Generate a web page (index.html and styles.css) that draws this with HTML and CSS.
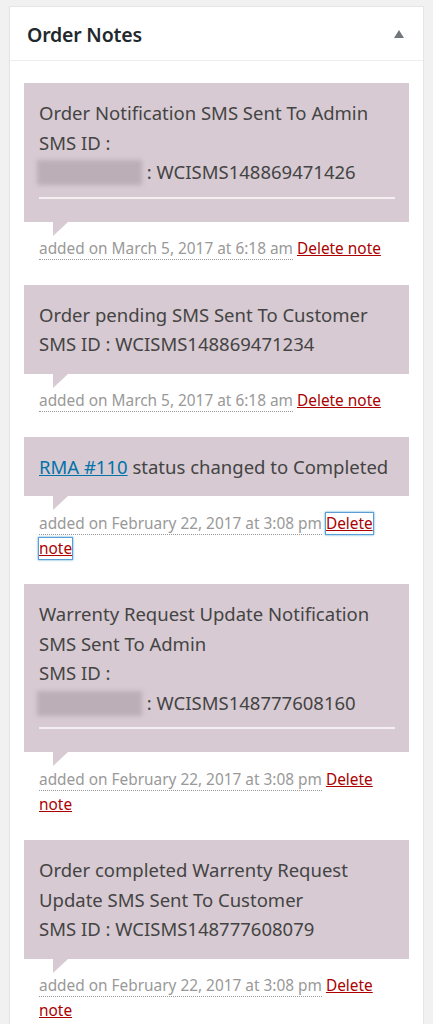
FILE: index.html
```html
<!DOCTYPE html>
<html>
<head>
<meta charset="utf-8">
<link rel="stylesheet" href="styles.css">
</head>
<body>
<div class="postbox">
  <div class="hndle">
    <h2>Order Notes</h2>
    <span class="toggle"></span>
  </div>
  <ul class="order-notes">
    <li>
      <div class="note-content">
        <p>Order Notification SMS Sent To Admin<br>SMS ID :<br><span class="blur"></span> : WCISMS148869471426</p>
        <hr>
      </div>
      <p class="meta"><abbr>added on March 5, 2017 at 6:18 am</abbr> <a href="#" class="delete">Delete note</a></p>
    </li>
    <li>
      <div class="note-content">
        <p>Order pending SMS Sent To Customer<br>SMS ID : WCISMS148869471234</p>
      </div>
      <p class="meta"><abbr>added on March 5, 2017 at 6:18 am</abbr> <a href="#" class="delete">Delete note</a></p>
    </li>
    <li>
      <div class="note-content">
        <p><a href="#" class="link">RMA #110</a> status changed to Completed</p>
      </div>
      <p class="meta"><abbr>added on February 22, 2017 at 3:08 pm</abbr> <a href="#" class="delete focus">Delete note</a></p>
    </li>
    <li>
      <div class="note-content">
        <p>Warrenty Request Update Notification<br>SMS Sent To Admin<br>SMS ID :<br><span class="blur"></span> : WCISMS148777608160</p>
        <hr>
      </div>
      <p class="meta"><abbr>added on February 22, 2017 at 3:08 pm</abbr> <a href="#" class="delete">Delete note</a></p>
    </li>
    <li>
      <div class="note-content">
        <p>Order completed Warrenty Request<br>Update SMS Sent To Customer<br>SMS ID : WCISMS148777608079</p>
      </div>
      <p class="meta"><abbr>added on February 22, 2017 at 3:08 pm</abbr> <a href="#" class="delete">Delete note</a></p>
    </li>
  </ul>
</div>
</body>
</html>
```
FILE: styles.css
```css
html, body {
  margin: 0;
  padding: 0;
  background: #f1f1f1;
}
body {
  padding: 6px 9px 0 9px;
  font-family: "Noto Sans", "Open Sans", sans-serif;
  color: #444;
}
.postbox {
  background: #fff;
  border: 1px solid #e5e5e5;
  border-bottom: none;
  box-shadow: 0 1px 1px rgba(0,0,0,0.04);
}
.hndle {
  display: flex;
  align-items: center;
  justify-content: space-between;
  height: 53px;
  padding: 0 19px 0 17px;
  border-bottom: 1px solid #eee;
}
.hndle h2 {
  margin: 0;
  padding-top: 1px;
  font-size: 19.5px;
  font-weight: 600;
  color: #23282d;
  letter-spacing: -0.2px;
}
.toggle {
  width: 0;
  height: 0;
  border-left: 5.5px solid transparent;
  border-right: 5.5px solid transparent;
  border-bottom: 8px solid #72777c;
}
.order-notes {
  list-style: none;
  margin: 0;
  padding: 22px 14px 0 14px;
}
.order-notes li {
  margin: 0 0 9px 0;
}
.note-content {
  position: relative;
  background: #d7cad2;
  padding: 15px 14px 15px 15px;
}
.note-content::after {
  content: "";
  position: absolute;
  left: 29px;
  bottom: -14px;
  width: 0;
  height: 0;
  border-style: solid;
  border-width: 14px 15px 0 0;
  border-color: #d7cad2 transparent transparent transparent;
}
.note-content p {
  margin: 0;
  font-size: 18.5px;
  line-height: 29.5px;
  color: #444;
}
.note-content hr {
  border: none;
  height: 2px;
  background: #f4f0f2;
  margin: 10px 0 8px 0;
}
.blur {
  display: inline-block;
  width: 105px;
  height: 25px;
  margin-left: -2px;
  vertical-align: -6px;
  background: #bcaeb7;
  filter: blur(2px);
}
.link {
  color: #0073aa;
  text-decoration: underline;
}
.meta {
  margin: 0;
  padding: 14.5px 14.5px 14.5px 15px;
  font-size: 15.4px;
  line-height: 25px;
  color: #999;
}
.meta abbr {
  text-decoration: none;
  border-bottom: 1px dotted #999;
}
.delete {
  color: #a00;
  text-decoration: underline;
}
.focus {
  box-shadow: 0 0 0 1px #5b9dd9, 0 0 2px 1px rgba(30,140,190,0.8);
  -webkit-box-decoration-break: clone;
  box-decoration-break: clone;
  outline: none;
}
```
